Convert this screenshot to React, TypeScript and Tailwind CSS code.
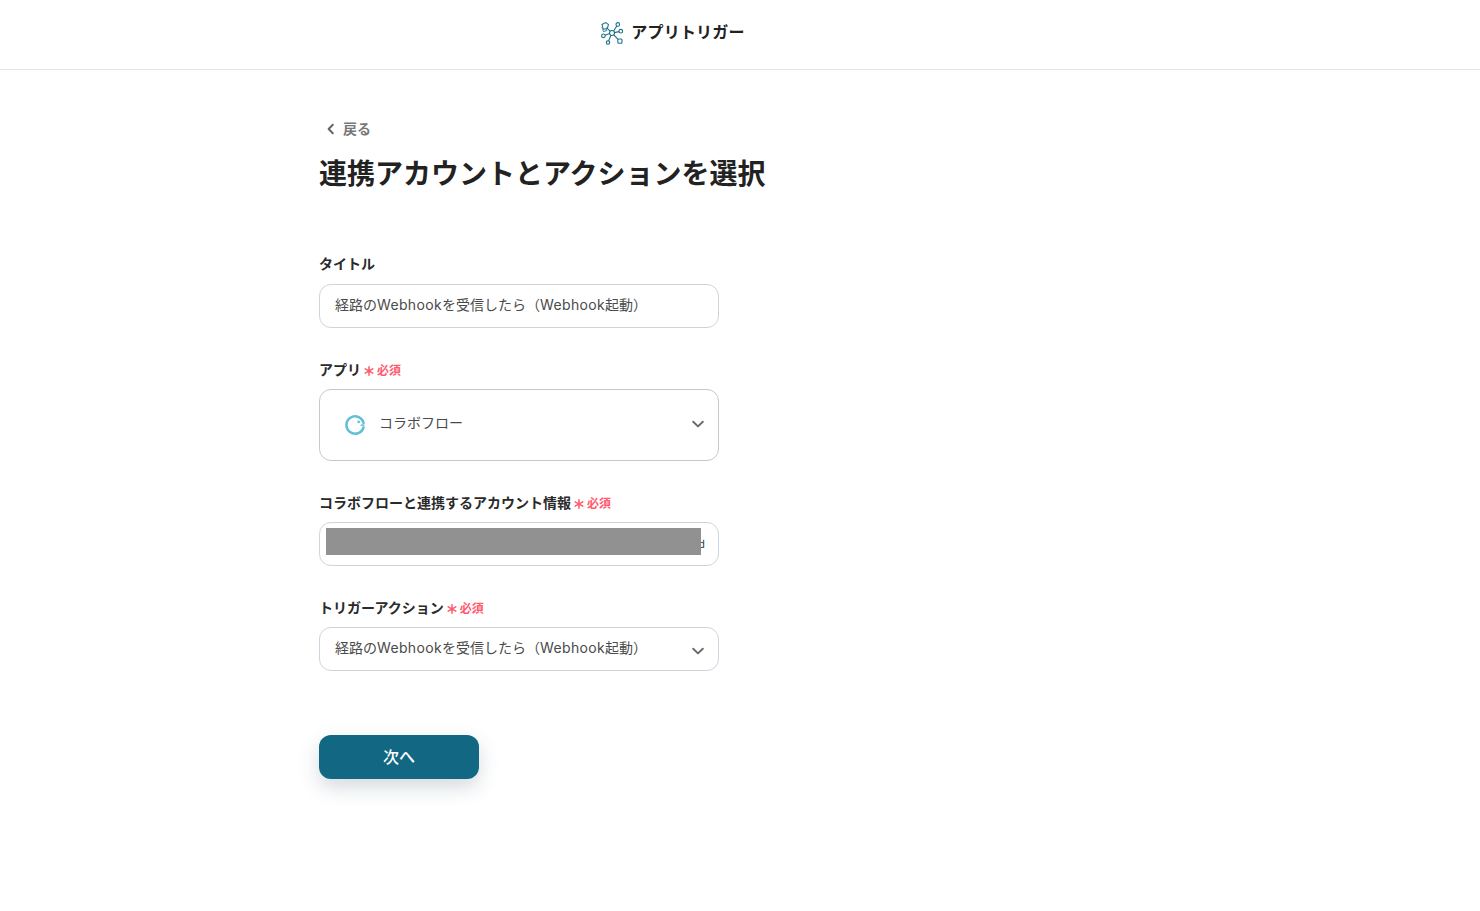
const font = { fontFamily: '"Noto Sans CJK JP", "Noto Sans", sans-serif' };
const latinFont = { fontFamily: 'Inter, "Noto Sans CJK JP", sans-serif' };

function Logo() {
  return (
    <svg width="24" height="24" viewBox="0 0 24 24" fill="none" stroke="#1f7088" strokeWidth="1.1" className="ml-[1px] -mr-[1px]">
      <circle cx="12" cy="12" r="2.5" />
      <path d="M10.2 10.2 L6.4 6.6 M13.6 10 L16.8 5 M14.4 11.6 L19 10.6 M13.8 13.8 L18 18.4 M11 14.3 L8.6 19.8 M9.6 12.6 L5 14.2" />
      <path d="M2 3.4 L5.6 1.6 L8.4 3.4 L7.4 7.6 L3.2 8.2 Z" />
      <path d="M1.8 6 L3.6 10.6 L6.6 9.6 L6.2 7.6" stroke="#5a98ab" />
      <circle cx="17.8" cy="3.4" r="1.8" />
      <circle cx="20.8" cy="10.2" r="1.8" />
      <rect x="17.8" y="18" width="4.2" height="4.2" rx="1" />
      <circle cx="8" cy="21.6" r="1.7" />
      <circle cx="3.4" cy="14.8" r="1.8" />
    </svg>
  );
}

function Chevron() {
  return (
    <svg width="14" height="14" viewBox="0 0 14 14" fill="none" stroke="#6b6b6b" strokeWidth="2" strokeLinecap="round" strokeLinejoin="round">
      <path d="M2.2 4.8 L7 9.4 L11.8 4.8" />
    </svg>
  );
}

function Label({ text, required }: { text: string; required?: boolean }) {
  return (
    <div className="flex items-center h-[20px] text-[14px] leading-[20px] font-semibold text-[#2a2a2a]">
      <span>{text}</span>
      {required && (
        <span className="flex items-center ml-[3px] text-[#ff5a6e]">
          <svg width="10" height="10" viewBox="0 0 10 10" stroke="#ff5a6e" strokeWidth="1.5" strokeLinecap="round" className="mt-[3px] mr-[3px]">
            <path d="M5 0.8 V9.2 M1.2 2.9 L8.8 7.1 M8.8 2.9 L1.2 7.1" />
          </svg>
          <span className="text-[12px] leading-[20px] font-semibold mt-[1px]">必須</span>
        </span>
      )}
    </div>
  );
}

function Value() {
  return (
    <span>
      経路の<span className="tracking-[0.35px]">Webhook</span>を受信したら（<span className="tracking-[0.35px]">Webhook</span>起動）
    </span>
  );
}

export default function App() {
  return (
    <div style={font} className="min-h-[911px] bg-white text-[#2a2a2a]">
      <header className="h-[70px] border-b border-[#e4e4e4] flex items-center justify-center pr-[136px] pb-[3px] gap-[8px]">
        <Logo />
        <span className="text-[16px] font-semibold tracking-[0.2px] text-[#222] mb-[5px]">アプリトリガー</span>
      </header>

      <main className="w-[842px] mx-auto pt-[47px]">
        <div className="flex items-center h-[22px] pl-[6px] gap-[6px] text-[14px] font-semibold text-[#777]">
          <svg width="12" height="12" viewBox="0 0 12 12" fill="none" stroke="#666" strokeWidth="2" strokeLinecap="round" strokeLinejoin="round" className="mt-[1px]">
            <path d="M7.8 1.8 L3.6 6 L7.8 10.2" />
          </svg>
          <span>戻る</span>
        </div>
        <h1 className="mt-[13px] text-[28px] leading-[40px] font-bold text-[#222]">連携アカウントとアクションを選択</h1>

        <div className="w-[400px] mt-[61px]">
          <Label text="タイトル" />
          <div style={latinFont} className="mt-[11px] h-[44px] rounded-[12px] border border-[#cfd3dc] flex items-center px-[15px] pb-[4px] text-[14px] text-[#4a4a4a]">
            <Value />
          </div>

          <div className="mt-[31px]"><Label text="アプリ" required /></div>
          <div className="mt-[10px] h-[72px] rounded-[12px] border border-[#c8c8c8] flex items-center pl-[23px] pr-[13px] pb-[6px]">
            <svg width="24" height="24" viewBox="0 0 24 24" fill="none" className="mt-[6px]">
              <path d="M20.6 10 A8.7 8.7 0 1 0 20.5 14.4" stroke="#62c0d6" strokeWidth="2.6" strokeLinecap="round" />
              <circle cx="15.7" cy="8.9" r="1.3" fill="#62c0d6" />
              <path d="M17.6 12.3 L21.4 12" stroke="#62c0d6" strokeWidth="1.4" />
            </svg>
            <span className="ml-[12px] flex-1 text-[14px] text-[#4a4a4a]">コラボフロー</span>
            <span className="mt-[3px]"><Chevron /></span>
          </div>

          <div className="mt-[31px]"><Label text="コラボフローと連携するアカウント情報" required /></div>
          <div className="relative mt-[10px] h-[44px] rounded-[12px] border border-[#cfd3dc] flex items-center justify-end pr-[13px] text-[10px] text-[#333]">
            <span className="leading-none">d</span>
            <div className="absolute left-[6px] top-[5px] w-[375px] h-[27px] bg-[#919191]" />
          </div>

          <div className="mt-[31px]"><Label text="トリガーアクション" required /></div>
          <div style={latinFont} className="mt-[10px] h-[44px] rounded-[12px] border border-[#cfd3dc] flex items-center justify-between pl-[15px] pr-[13px] pb-[4px] text-[14px] text-[#4a4a4a]">
            <Value />
            <span className="mt-[7px]"><Chevron /></span>
          </div>

          <button className="mt-[64px] w-[160px] h-[44px] rounded-[12px] bg-[#126882] text-white text-[16px] font-medium flex items-center justify-center pb-[2px] shadow-[0_8px_20px_rgba(40,70,90,0.2)]">
            次へ
          </button>
        </div>
      </main>
    </div>
  );
}
